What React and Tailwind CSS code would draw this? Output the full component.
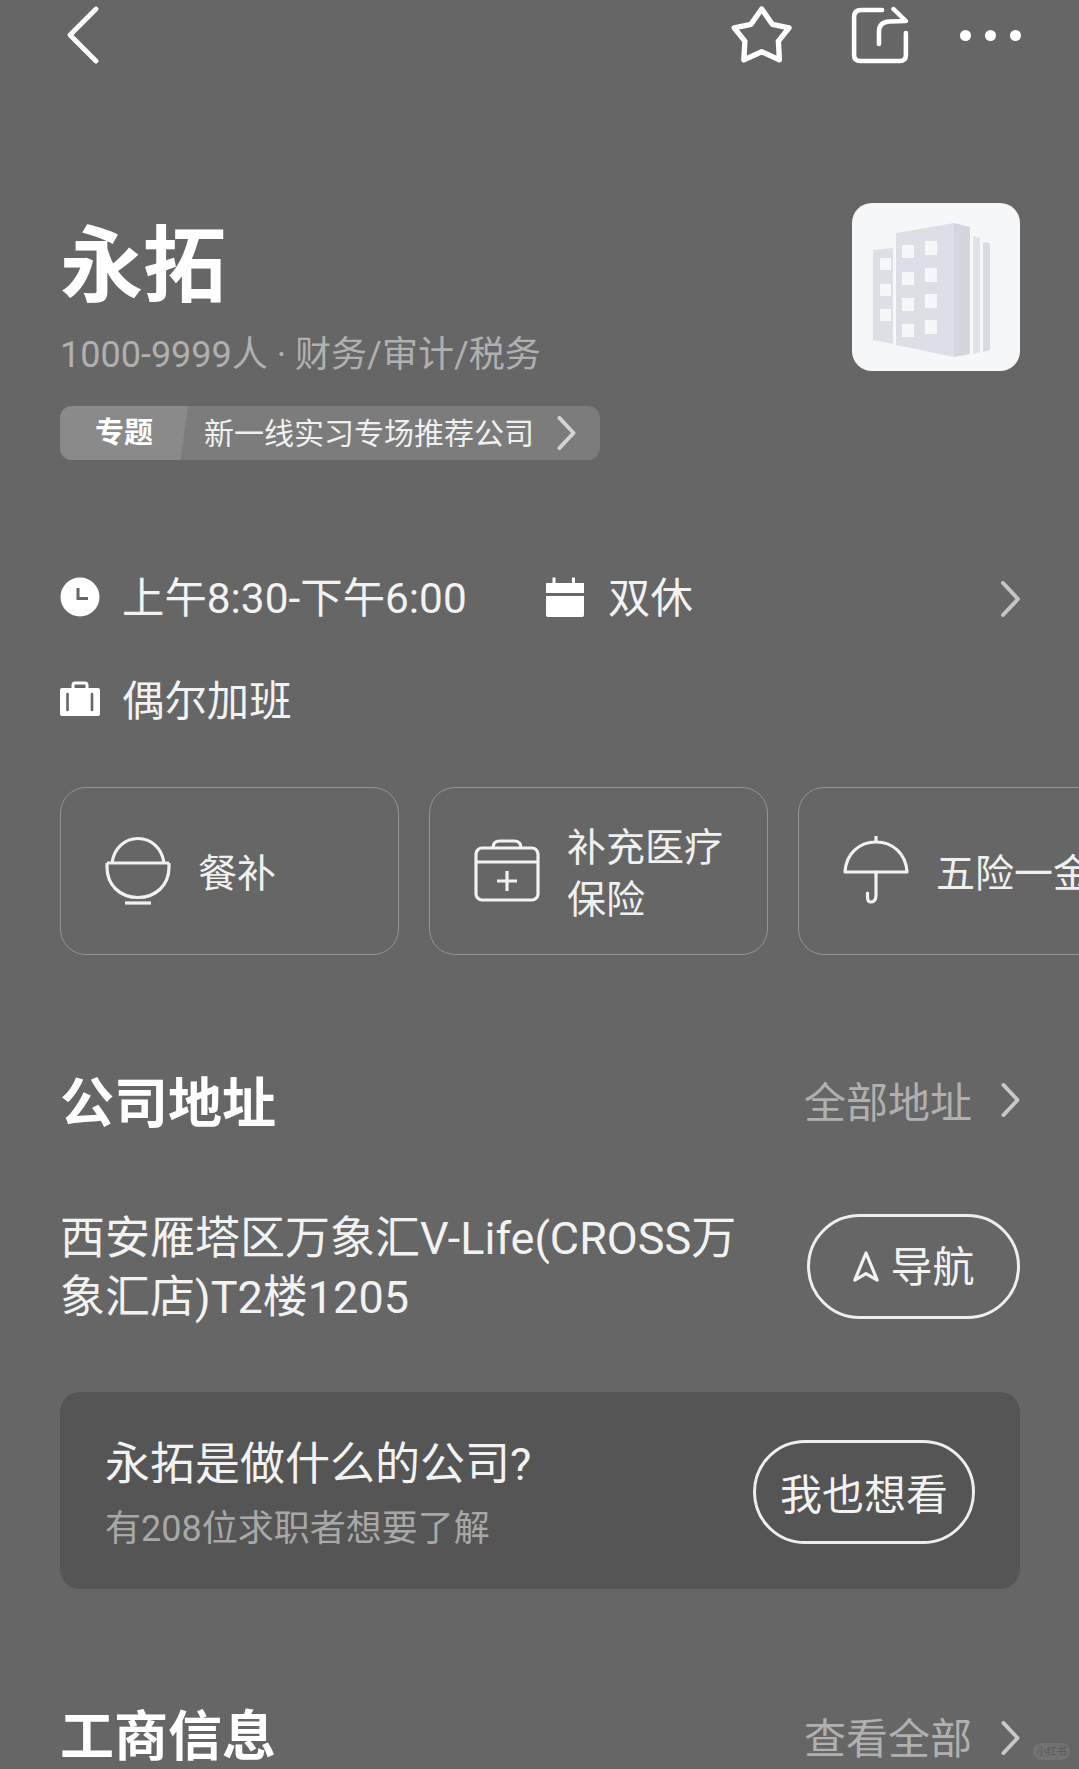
import React from 'react';

function Chevron({ className = '' }) {
  return (
    <svg viewBox="0 0 20 36" fill="none" className={className}>
      <path d="M3 2 L18 18 L3 34" stroke="currentColor" strokeWidth="4" strokeLinecap="round" strokeLinejoin="round" />
    </svg>
  );
}

function Building() {
  return (
    <svg viewBox="0 0 168 168" className="h-full w-full">
      <path d="M21 47 L41 45 L41 141 L21 137 Z" fill="#dcdfe5" />
      <path d="M44 30 L102 20 L102 154 L44 142 Z" fill="#dcdfe5" />
      <path d="M102 20 L118 24 L118 151 L102 154 Z" fill="#d3d6dd" />
      <path d="M121 33 L128 35 L128 149 L121 151 Z" fill="#e0e2e8" />
      <path d="M131 39 L138 40 L138 147 L131 149 Z" fill="#d8dbe1" />
      {[42, 69, 95, 121].map((y) => (
        <g key={y} fill="#f6f7f8">
          <rect x="50" y={y} width="12" height="13" />
          <rect x="73" y={y - 4} width="12" height="14" />
        </g>
      ))}
      {[55, 81, 106].map((y) => (
        <rect key={y} x="28" y={y} width="11" height="12" fill="#f6f7f8" />
      ))}
    </svg>
  );
}

function Benefit({ icon, lines }) {
  return (
    <div className="flex h-[168px] w-[339px] shrink-0 items-center gap-[27px] rounded-[26px] border border-[#949494] pl-[44px]">
      {icon}
      <div className="whitespace-nowrap pt-[5px] text-[39px] leading-[52px] text-[#f0f0f0]">
        {lines.map((l) => (
          <div key={l}>{l}</div>
        ))}
      </div>
    </div>
  );
}

export default function App() {
  return (
    <div
      className="relative h-[1769px] w-[1079px] overflow-hidden bg-[#666666] text-[#f2f2f2]"
      style={{ fontFamily: 'Roboto, "Noto Sans CJK SC", sans-serif' }}
    >
      {/* top bar */}
      <div className="flex h-[70px] items-center pl-[66px] pr-[58px] text-white">
        <svg viewBox="0 0 34 58" fill="none" className="mb-[1px] h-[58px] w-[34px]">
          <path d="M30 3 L4 29 L30 55" stroke="currentColor" strokeWidth="4.8" strokeLinecap="round" strokeLinejoin="round" />
        </svg>
        <div className="flex-1" />
        <svg viewBox="2 3 58 56" fill="none" className="h-[60px] w-[62px]">
          <path
            d="M30.7 6.7 L40.7 21 L56.3 24.3 L46.3 36.7 L47.3 54.3 L30.7 46.7 L14 54.3 L15 36.7 L5 24.3 L20.7 21 Z"
            stroke="currentColor"
            strokeWidth="5"
            strokeLinejoin="round"
          />
        </svg>
        <svg viewBox="0 0 56 58" fill="none" className="ml-[58px] h-[58px] w-[58px]" preserveAspectRatio="none">
          <path
            d="M30 4 H10 Q3 4 3 11 V49 Q3 55 9 55 H47 Q53 55 53 49 V27"
            stroke="currentColor"
            strokeWidth="4.4"
            strokeLinecap="round"
          />
          <path
            d="M27 38 V26 Q27 16 37 15.5 L53 15 L41 3"
            stroke="currentColor"
            strokeWidth="4.4"
            strokeLinecap="round"
            strokeLinejoin="round"
          />
        </svg>
        <div className="ml-[51px] flex gap-[14px]">
          <span className="h-[11px] w-[11px] rounded-full bg-white" />
          <span className="h-[11px] w-[11px] rounded-full bg-white" />
          <span className="h-[11px] w-[11px] rounded-full bg-white" />
        </div>
      </div>

      <div className="pl-[60px] pr-[59px]">
        {/* company header */}
        <div className="mt-[133px] flex items-start justify-between">
          <div className="pt-[19px]">
            <div className="h-[84px] pt-[3px] text-[83px] font-bold leading-[84px] text-white">永拓</div>
            <div className="mt-[25px] h-[44px] whitespace-nowrap pt-[2px] text-[36px] leading-[44px] text-[#b0b0b0]">
              1000-9999人 · 财务/审计/税务
            </div>
            <div className="relative mt-[31px] flex h-[54px] w-[540px] items-center rounded-[12px] bg-[#7c7c7c]">
              <div className="flex h-full w-[128px] items-center justify-center rounded-l-[12px] bg-[#8a8a8a] pt-[1px] text-[29px] font-bold text-white [clip-path:polygon(0_0,100%_0,94%_100%,0_100%)]">
                专题
              </div>
              <span className="ml-[16px] whitespace-nowrap text-[30px] text-[#f0f0f0]">新一线实习专场推荐公司</span>
              <Chevron className="ml-[22px] h-[34px] w-[20px] text-[#d4d4d4]" />
            </div>
          </div>
          <div className="h-[168px] w-[168px] overflow-hidden rounded-[20px] bg-[#f6f7f8]">
            <Building />
          </div>
        </div>

        {/* hours */}
        <div className="mt-[110px] flex h-[56px] items-center text-[42.4px] leading-[56px]">
          <svg viewBox="0 0 40 40" className="mb-[2px] h-[40px] w-[40px]">
            <circle cx="20" cy="20" r="19.5" fill="#fff" />
            <path d="M18 11 V21.5 H28" fill="none" stroke="#666" strokeWidth="3" />
          </svg>
          <span className="ml-[22px] w-[423px] whitespace-nowrap pt-[1px]">上午8:30-下午6:00</span>
          <svg viewBox="0 0 40 40" className="mb-[2px] h-[40px] w-[40px]">
            <path d="M1 6 H7.5 V0.5 H10.5 V6 H27 V0.5 H30 V6 H39 V16 H1 Z" fill="#fff" />
            <path d="M1 19 H39 V38 Q39 40 37 40 H3 Q1 40 1 38 Z" fill="#fff" />
          </svg>
          <span className="ml-[23px] pt-[1px]">双休</span>
          <div className="flex-1" />
          <Chevron className="mt-[2px] h-[36px] w-[20px] text-[#c4c4c4]" />
        </div>
        <div className="mt-[46px] flex h-[56px] items-center text-[42.4px] leading-[56px]">
          <svg viewBox="0 0 40 36" className="mb-[2px] h-[36px] w-[40px]">
            <path d="M13 8 V4 Q13 2 15 2 H25 Q27 2 27 4 V8" fill="none" stroke="#fff" strokeWidth="3" />
            <path d="M2 7 H38 Q40 7 40 9 V33 Q40 35 38 35 H2 Q0 35 0 33 V9 Q0 7 2 7 Z" fill="#fff" />
            <path d="M7.5 13 V29 M32 13 V29" stroke="#666" strokeWidth="2.6" strokeLinecap="round" />
          </svg>
          <span className="ml-[22px] pt-[3px]">偶尔加班</span>
        </div>

        {/* benefits */}
        <div className="mt-[59px] flex gap-[30px]">
          <Benefit
            lines={['餐补']}
            icon={
              <svg viewBox="0 0 66 70" fill="none" className="h-[70px] w-[66px]" stroke="#f2f2f2" strokeWidth="3.2">
                <path d="M7 27 C9 12 20 2.5 33 2.5 C46 2.5 57 12 59 27" />
                <path d="M2 27 H64" />
                <path d="M2 27 V31 C2 49 15 61.5 33 61.5 C51 61.5 64 49 64 31 V27" />
                <path d="M20 67 H46" />
              </svg>
            }
          />
          <Benefit
            lines={['补充医疗', '保险']}
            icon={
              <svg viewBox="0 0 66 64" fill="none" className="h-[64px] w-[66px]" stroke="#f2f2f2" strokeWidth="3.2">
                <rect x="2" y="9" width="62" height="52" rx="6" />
                <path d="M2 23 H64" />
                <path d="M19 9 Q19 2 26 2 H40 Q47 2 47 9" />
                <path d="M33 32 V52 M23 42 H43" />
              </svg>
            }
          />
          <Benefit
            lines={['五险一金']}
            icon={
              <svg viewBox="0 0 66 72" fill="none" className="h-[72px] w-[66px]" stroke="#f2f2f2" strokeWidth="3.2">
                <path d="M2 37 C3 18 17 7 33 7 C49 7 63 18 64 37 Z" strokeLinejoin="round" />
                <path d="M33 1 V7" />
                <path d="M33 37 V60 Q33 67 28 67 Q24.5 67 24.5 62 V58" strokeLinecap="round" />
              </svg>
            }
          />
        </div>

        {/* address */}
        <div className="mt-[118px] flex h-[60px] items-center justify-between">
          <div className="pt-[3px] text-[54px] font-bold leading-[60px] text-white">公司地址</div>
          <div className="flex items-center text-[42px] text-[#b0b0b0]">
            <span className="pl-[2px]">全部地址</span>
            <Chevron className="mb-[6px] ml-[28px] h-[34px] w-[20px] text-[#c8c8c8]" />
          </div>
        </div>
        <div className="mt-[72px] flex items-center justify-between">
          <div className="w-[690px] pt-[4px] text-[45px] leading-[59px]">
            西安雁塔区万象汇V-Life(CROSS万象汇店)T2楼1205
          </div>
          <div className="flex h-[105px] w-[213px] items-center justify-center gap-[10px] rounded-full border-[3px] border-[#eeeeee] pt-[2px] text-[42px]">
            <svg viewBox="0 0 30 34" fill="none" className="h-[36px] w-[28px]" stroke="#f2f2f2" strokeWidth="3.4" strokeLinejoin="round">
              <path d="M15 2 L27 31 L15 24 L3 31 Z" />
            </svg>
            导航
          </div>
        </div>

        {/* question card */}
        <div className="mt-[65px] flex h-[197px] justify-between rounded-[20px] bg-[#555555] pl-[45px] pr-[45px]">
          <div className="pt-[45px]">
            <div className="text-[45px] leading-[56px] text-[#f2f2f2]">永拓是做什么的公司?</div>
            <div className="mt-[12px] text-[36px] leading-[48px] text-[#a8a8a8]">有208位求职者想要了解</div>
          </div>
          <div className="mt-[48px] flex h-[104px] w-[222px] items-center justify-center rounded-full border-[3px] border-[#eeeeee] pt-[6px] text-[42px]">
            我也想看
          </div>
        </div>

        {/* business info */}
        <div className="mt-[119px] flex h-[60px] items-center justify-between">
          <div className="text-[54px] font-bold leading-[60px] text-white">工商信息</div>
          <div className="flex items-center text-[42px] text-[#b0b0b0]">
            <span className="pl-[2px] pt-[3px]">查看全部</span>
            <Chevron className="ml-[28px] h-[34px] w-[20px] text-[#c8c8c8]" />
          </div>
        </div>
      </div>

      {/* watermark */}
      <div className="absolute bottom-[9px] right-[9px] flex h-[17px] w-[37px] items-center justify-center rounded-full bg-[#727272] text-[10px] leading-none text-[#585858]">
        小红书
      </div>
    </div>
  );
}
